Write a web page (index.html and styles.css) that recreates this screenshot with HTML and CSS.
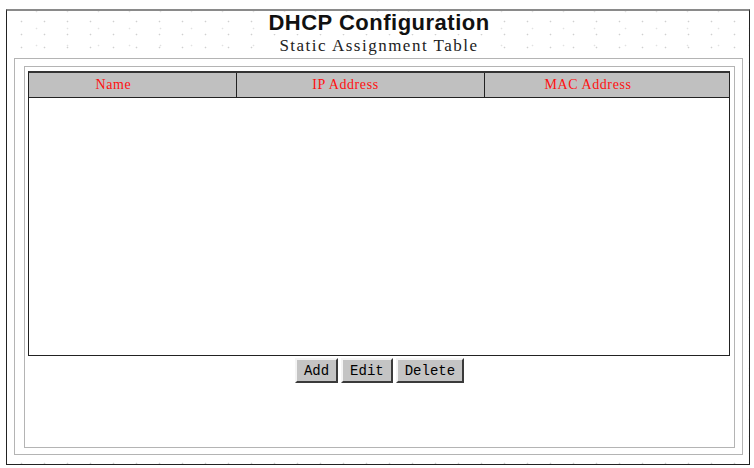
FILE: index.html
```html
<!DOCTYPE html>
<html>
<head>
<meta charset="utf-8">
<title>DHCP Configuration</title>
<link rel="stylesheet" href="styles.css">
</head>
<body>
<div class="frame">
  <div class="title">
    <h1 class="title-main">DHCP Configuration</h1>
    <div class="title-sub">Static Assignment Table</div>
  </div>
  <div class="panel">
    <div class="inner">
      <div class="table">
        <div class="thead">
          <div class="th th-name">Name</div>
          <div class="th th-ip">IP Address</div>
          <div class="th th-mac">MAC Address</div>
        </div>
        <div class="tbody"></div>
      </div>
      <div class="buttons">
        <button class="btn" type="button">Add</button>
        <button class="btn" type="button">Edit</button>
        <button class="btn" type="button">Delete</button>
      </div>
    </div>
  </div>
</div>
</body>
</html>
```

FILE: styles.css
```css
html, body {
  margin: 0;
  padding: 0;
  background: #ffffff;
}

.frame {
  margin: 9px 0 0 6px;
  width: 744px;
  height: 456px;
  box-sizing: border-box;
  border: 1px solid #222222;
  border-top: 2px solid #8a8a8a;
  padding: 0 5px 0 7px;
  display: flex;
  flex-direction: column;
  background-color: #ffffff;
  background-image:
    radial-gradient(circle, rgba(150,150,150,0.45) 0.7px, transparent 1.1px),
    radial-gradient(circle, rgba(170,170,170,0.35) 0.7px, transparent 1.1px);
  background-size: 23px 13px, 31px 17px;
  background-position: 3px 4px, 14px 9px;
}

.title {
  height: 47px;
  padding-top: 1px;
  box-sizing: border-box;
  display: flex;
  flex-direction: column;
  align-items: center;
}

.title-main {
  margin: 0;
  font-family: "Liberation Sans", Arial, sans-serif;
  font-weight: bold;
  font-size: 22px;
  line-height: 22px;
  letter-spacing: 0.5px;
  color: #111111;
  background: #ffffff;
  padding: 0 8px;
}

.title-sub {
  margin-top: 3px;
  font-family: "Liberation Serif", "Times New Roman", serif;
  font-size: 17px;
  line-height: 18px;
  letter-spacing: 1.5px;
  color: #222222;
  background: #ffffff;
  padding: 0 6px;
}

.panel {
  width: 729px;
  height: 397px;
  box-sizing: border-box;
  border: 1px solid #b4b4b4;
  background: #ffffff;
  padding: 7px 0 0 9px;
}

.inner {
  width: 711px;
  height: 382px;
  box-sizing: border-box;
  border: 1px solid #b4b4b4;
  padding: 4px 0 0 3px;
  display: flex;
  flex-direction: column;
}

.table {
  width: 702px;
  height: 285px;
  box-sizing: border-box;
  border: 1px solid #222222;
  border-top: 2px solid #333333;
  display: flex;
  flex-direction: column;
  background: #ffffff;
}

.thead {
  display: grid;
  grid-template-columns: 208px 248px 1fr;
  height: 25px;
  box-sizing: border-box;
  border-bottom: 1px solid #222222;
  background: #c0c0c0;
}

.th {
  display: flex;
  align-items: center;
  justify-content: center;
  font-family: "Liberation Serif", "Times New Roman", serif;
  font-size: 14px;
  letter-spacing: 0.6px;
  color: #ff1010;
  box-sizing: border-box;
}

.th-name {
  border-right: 1px solid #222222;
  padding-right: 38px;
}

.th-ip {
  border-right: 1px solid #222222;
  padding-right: 30px;
}

.th-mac {
  padding-right: 38px;
}

.tbody {
  flex: 1;
}

.buttons {
  display: flex;
  justify-content: center;
  gap: 3px;
  margin-top: 2px;
  padding-right: 3px;
}

.btn {
  height: 25px;
  margin: 0;
  padding: 0 7px;
  box-sizing: border-box;
  background: #c4c4c4;
  border: 2px solid;
  border-color: #f4f4f4 #3a3a3a #3a3a3a #f4f4f4;
  font-family: "Liberation Mono", "Courier New", monospace;
  font-weight: normal;
  font-size: 14px;
  color: #000000;
  cursor: pointer;
}
```
